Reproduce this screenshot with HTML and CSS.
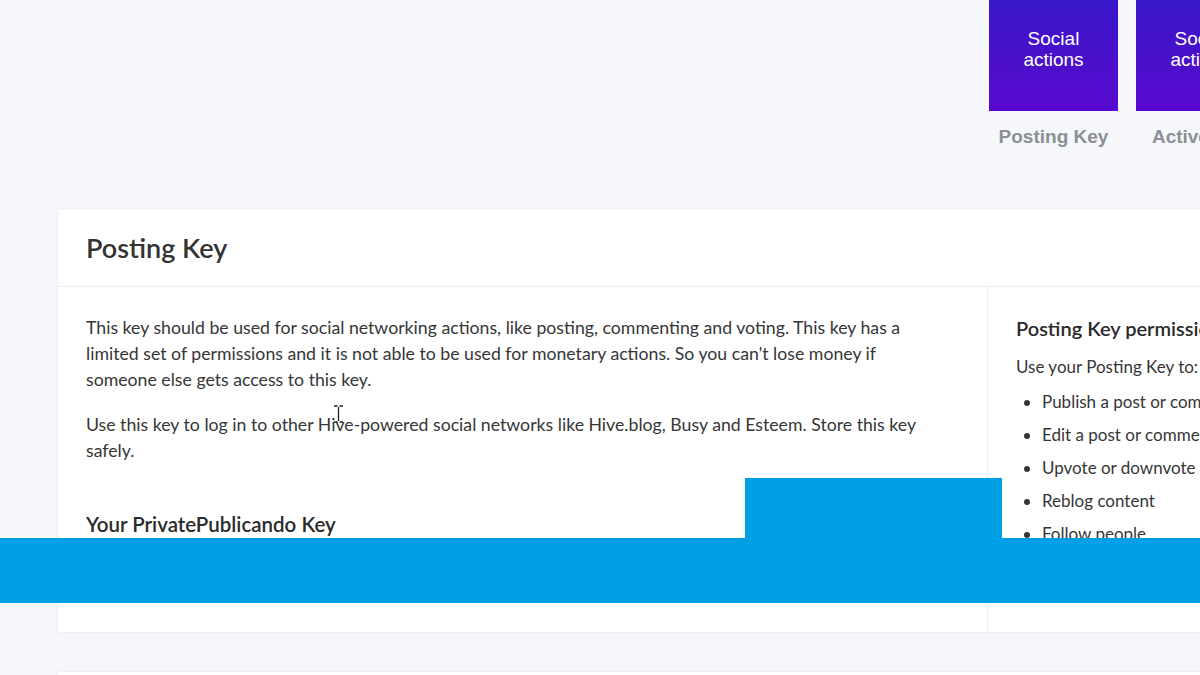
FILE: index.html
```html
<!DOCTYPE html>
<html lang="en">
<head>
<meta charset="utf-8">
<title>Posting Key</title>
<link rel="stylesheet" href="styles.css">
</head>
<body>
<div class="page">
  <div class="tiles">
    <div class="tile-col">
      <div class="tile"><span>Social<br>actions</span></div>
      <div class="tile-label">Posting Key</div>
    </div>
    <div class="tile-col">
      <div class="tile"><span>Social<br>actions</span></div>
      <div class="tile-label">Active Key</div>
    </div>
  </div>

  <section class="card">
    <header class="card-head"><h2>Posting Key</h2></header>
    <div class="card-body">
      <div class="main-col">
        <p>This key should be used for social networking actions, like posting, commenting and voting. This key has a limited set of permissions and it is not able to be used for monetary actions. So you can't lose money if someone else gets access to this key.</p>
        <p>Use this key to log in to other Hive-powered social networks like Hive.blog, Busy and Esteem. Store this key safely.</p>
        <h3>Your PrivatePublicando Key</h3>
      </div>
      <aside class="side-col">
        <h4>Posting Key permissions</h4>
        <p>Use your Posting Key to:</p>
        <ul>
          <li>Publish a post or comment</li>
          <li>Edit a post or comment</li>
          <li>Upvote or downvote</li>
          <li>Reblog content</li>
          <li>Follow people</li>
        </ul>
      </aside>
    </div>
  </section>

  <section class="card card-next"></section>
</div>

<div class="redact redact-a"></div>
<div class="redact redact-b"></div>
<svg class="cursor" width="11" height="18" viewBox="0 0 11 18"><path d="M1 1h3.5M6.5 1H10M5.5 2v14M1 17h3.5M6.5 17H10" stroke="#222" stroke-width="1.3" fill="none"/></svg>
</body>
</html>
```
FILE: styles.css
```css
html, body {
  margin: 0;
  padding: 0;
}
body {
  background: #f6f7fb;
  width: 1200px;
  height: 675px;
  overflow: hidden;
  position: relative;
  font-family: "Lato", "Noto Sans", sans-serif;
  color: #333;
}
.page {
  display: flex;
  flex-direction: column;
}
.tiles {
  display: flex;
  gap: 18px;
  padding-left: 989px;
  height: 208px;
  font-family: "Liberation Sans", Arial, sans-serif;
}
.tile-col {
  flex: 0 0 129px;
  display: flex;
  flex-direction: column;
  align-items: center;
}
.tile {
  width: 129px;
  height: 111px;
  background: linear-gradient(180deg, #3816c9 0%, #4a10cb 55%, #5a09cf 100%);
  color: #fff;
  display: flex;
  justify-content: center;
  padding-top: 28px;
  box-sizing: border-box;
  text-align: center;
  font-size: 19px;
  line-height: 21px;
}
.tile-label {
  margin-top: 15px;
  font-size: 19px;
  font-weight: bold;
  color: #8b8f96;
  white-space: nowrap;
}
.card {
  margin-left: 57px;
  width: 1300px;
  background: #fff;
  border: 1px solid #eceef2;
  border-radius: 3px;
  box-sizing: border-box;
}
.card-head {
  height: 77px;
  border-bottom: 1px solid #eceef2;
  display: flex;
  align-items: center;
  padding-left: 28px;
}
.card-head h2 {
  margin: 0;
  font-size: 27px;
  font-weight: 600;
  color: #333;
}
.card-body {
  display: flex;
  height: 345px;
}
.main-col {
  width: 930px;
  box-sizing: border-box;
  padding: 28px 40px 0 28px;
  border-right: 1px solid #eceef2;
  font-size: 17.7px;
  line-height: 26px;
  color: #363636;
}
.main-col p {
  margin: 0 0 19px;
}
.main-col h3 {
  margin: 47px 0 0;
  font-size: 20.5px;
  font-weight: 600;
  color: #2a2a2a;
}
.side-col {
  padding: 28px 0 0 28px;
  font-size: 17px;
  color: #363636;
  white-space: nowrap;
}
.side-col h4 {
  margin: 0;
  font-size: 20px;
  font-weight: 600;
  line-height: 26px;
  color: #2a2a2a;
}
.side-col p {
  margin: 13px 0 0;
  line-height: 26px;
}
.side-col ul {
  margin: 9px 0 0;
  padding-left: 26px;
}
.side-col li {
  line-height: 26px;
  margin-bottom: 7px;
}
.card-next {
  margin-top: 38px;
  height: 40px;
}
.redact {
  position: absolute;
  background: #00a0e6;
}
.redact-a {
  left: 745px;
  top: 478px;
  width: 257px;
  height: 61px;
}
.redact-b {
  left: 0;
  top: 538px;
  width: 1200px;
  height: 65px;
}
.cursor {
  position: absolute;
  left: 333px;
  top: 405px;
}
```
